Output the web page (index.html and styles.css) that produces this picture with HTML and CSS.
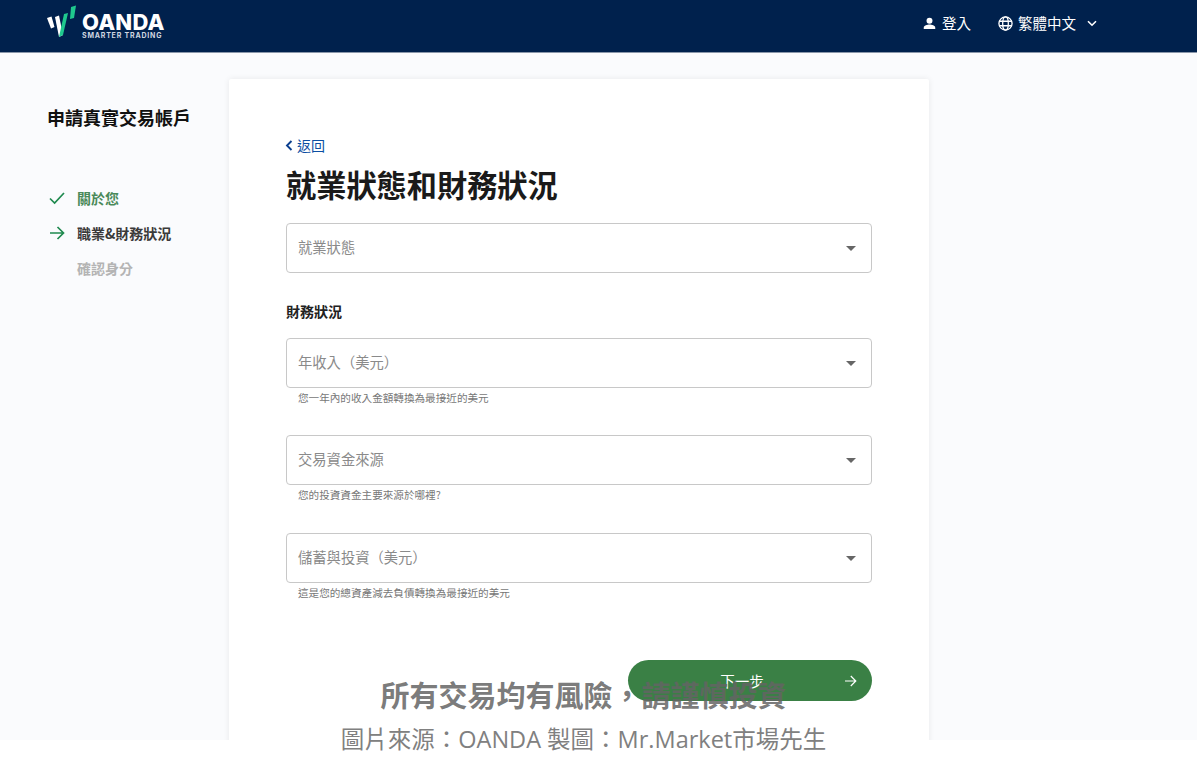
FILE: index.html
```html
<!DOCTYPE html>
<html lang="zh-Hant">
<head>
<meta charset="utf-8">
<title>OANDA</title>
<link rel="stylesheet" href="styles.css">
</head>
<body>
<div class="app">
  <header class="topbar">
    <div class="logo">
      <svg class="logo-mark" width="30" height="32" viewBox="0 0 30 32">
        <polygon points="0,13 4.5,11.5 7.5,22 4,23.5" fill="#fff"/>
        <polygon points="8,12 12,10.5 16,30 12,32" fill="#fff"/>
        <polygon points="16,30 12,32 17,9 21,8" fill="#1fc98e"/>
        <polygon points="24,2 29,0.5 27,13 23,14" fill="#1fc98e"/>
      </svg>
      <div class="logo-text">
        <span class="logo-name">OANDA</span>
        <span class="logo-tag">SMARTER TRADING</span>
      </div>
    </div>
    <nav class="topnav">
      <a class="nav-item login">
        <svg width="13" height="13" viewBox="0 0 14 14"><circle cx="7" cy="4" r="3.2" fill="#fff"/><path d="M0.8 13v-1.5C0.8 9.4 4.6 8.2 7 8.2s6.2 1.2 6.2 3.3V13z" fill="#fff"/></svg>
        <span>登入</span>
      </a>
      <a class="nav-item lang">
        <svg width="15" height="15" viewBox="0 0 16 16" fill="none" stroke="#fff" stroke-width="1.4"><circle cx="8" cy="8" r="7"/><ellipse cx="8" cy="8" rx="3" ry="7"/><path d="M1.3 5.6h13.4M1.3 10.4h13.4"/></svg>
        <span>繁體中文</span>
        <svg class="chev" width="10" height="7" viewBox="0 0 10 7" fill="none" stroke="#fff" stroke-width="1.6"><path d="M1 1.2l4 4 4-4"/></svg>
      </a>
    </nav>
  </header>
  <div class="main">
    <aside class="sidebar">
      <h2 class="side-title">申請真實交易帳戶</h2>
      <ul class="steps">
        <li class="step done">
          <svg width="18" height="14" viewBox="0 0 18 14" fill="none" stroke="#1f8a4f" stroke-width="1.7"><path d="M2 7.5l4.6 4.6L16 2"/></svg>
          <span>關於您</span>
        </li>
        <li class="step current">
          <svg width="18" height="14" viewBox="0 0 18 14" fill="none" stroke="#1f8a4f" stroke-width="1.7"><path d="M2 7h13.5M9.5 1l6 6-6 6"/></svg>
          <span>職業&amp;財務狀況</span>
        </li>
        <li class="step todo">
          <span class="step-spacer"></span>
          <span>確認身分</span>
        </li>
      </ul>
    </aside>
    <section class="card">
      <a class="back">
        <svg width="8" height="11" viewBox="0 0 8 11" fill="none" stroke="#0b3f8f" stroke-width="1.9"><path d="M6.5 1L2 5.5 6.5 10"/></svg>
        <span>返回</span>
      </a>
      <h1 class="title">就業狀態和財務狀況</h1>
      <div class="select first"><span>就業狀態</span><i class="caret"></i></div>
      <h3 class="section">財務狀況</h3>
      <div class="field">
        <div class="select"><span>年收入（美元）</span><i class="caret"></i></div>
        <p class="hint">您一年內的收入金額轉換為最接近的美元</p>
      </div>
      <div class="field wide-gap">
        <div class="select"><span>交易資金來源</span><i class="caret"></i></div>
        <p class="hint">您的投資資金主要來源於哪裡?</p>
      </div>
      <div class="field">
        <div class="select"><span>儲蓄與投資（美元）</span><i class="caret"></i></div>
        <p class="hint">這是您的總資產減去負債轉換為最接近的美元</p>
      </div>
      <div class="actions">
        <button class="next" type="button">
          <span>下一步</span>
          <svg width="13" height="12" viewBox="0 0 13 12" fill="none" stroke="#fff" stroke-width="1.2"><path d="M1 6h10.5M6.8 1l5 5-5 5"/></svg>
        </button>
      </div>
    </section>
  </div>
</div>
<div class="credit">
  <p class="credit-main">所有交易均有風險，請謹慎投資</p>
  <p class="credit-sub">圖片來源：OANDA 製圖：Mr.Market市場先生</p>
</div>
</body>
</html>
```

FILE: styles.css
```css
* { box-sizing: border-box; }
html, body { margin: 0; padding: 0; background: #fff; }
body {
  position: relative;
  width: 1197px;
  height: 768px;
  overflow: hidden;
  font-family: "Noto Sans CJK TC", "Noto Sans", sans-serif;
  color: #1c1c1c;
}
.app { height: 740px; overflow: hidden; background: #fafbfd; }

.topbar {
  height: 53px;
  background: #00214d;
  border-bottom: 1px solid #8a97aa;
  display: flex;
  align-items: center;
  justify-content: space-between;
  padding: 0 100px 0 47px;
}
.logo { display: flex; align-items: flex-start; height: 52px; }
.logo-mark { margin-top: 5px; margin-right: 5px; }
.logo-text { display: flex; flex-direction: column; margin-top: 12px; }
.logo-name {
  font-family: "Inter", "Liberation Sans", sans-serif;
  font-weight: 800;
  font-size: 22px;
  line-height: 20px;
  color: #fff;
  letter-spacing: 0.2px;
}
.logo-tag {
  font-family: "Inter", "Liberation Sans", sans-serif;
  font-weight: 700;
  font-size: 7px;
  line-height: 8px;
  letter-spacing: 0.8px;
  color: #cfd6e0;
}
.topnav { display: flex; align-items: center; gap: 27px; margin-top: -6px; }
.nav-item { display: flex; align-items: center; color: #fff; font-size: 14.5px; line-height: 20px; }
.login { gap: 6px; }
.lang { gap: 5px; }
.chev { margin-left: 6px; }

.main { display: flex; align-items: flex-start; padding-top: 26px; }
.sidebar { width: 229px; flex: none; padding: 26px 0 0 47px; }
.side-title { margin: 0; font-size: 18px; line-height: 25px; font-weight: 700; color: #111; }
.steps { list-style: none; margin: 58px 0 0; padding: 0; display: flex; flex-direction: column; gap: 15px; }
.step { display: flex; align-items: center; gap: 11px; height: 20px; font-size: 14px; font-weight: 700; }
.step svg { margin-left: 1px; flex: none; }
.step-spacer { width: 19px; }
.done { color: #4a8a5a; }
.current { color: #3a3a3a; }
.todo { color: #b4b4b4; }

.card {
  width: 700px;
  height: 700px;
  flex: none;
  background: #fff;
  box-shadow: 0 0 6px rgba(0, 0, 0, 0.08);
  border-radius: 2px;
  padding: 56px 57px 0;
}
.back { display: flex; align-items: center; gap: 4px; height: 20px; margin-left: -1px; color: #0b4ea2; font-size: 14px; line-height: 20px; }
.title { margin: 8px 0 0; font-size: 30.2px; line-height: 42px; font-weight: 700; color: #1a1a1a; }
.select {
  height: 50px;
  border: 1px solid #c8c8c8;
  border-radius: 4px;
  background: #fff;
  display: flex;
  align-items: center;
  justify-content: space-between;
  padding: 0 15px 0 11px;
  font-size: 14.3px;
  color: #8a8a8a;
}
.select span { margin-top: -3px; }
.select.first { margin-top: 18px; }
.caret {
  width: 0;
  height: 0;
  border-left: 5px solid transparent;
  border-right: 5px solid transparent;
  border-top: 5px solid #666;
}
.section { margin: 28px 0 0; font-size: 14px; line-height: 20px; font-weight: 700; color: #222; }
.section + .field { margin-top: 17px; }
.field { margin-bottom: 29px; }
.field.wide-gap { margin-bottom: 30px; }
.hint { margin: 2px 0 0; padding-left: 12px; height: 16px; font-size: 10.6px; line-height: 16px; color: #777; }
.actions { display: flex; justify-content: flex-end; margin-top: 59px; }
.next {
  position: relative;
  width: 244px;
  height: 41px;
  border: 0;
  border-radius: 21px;
  background: #3a8045;
  color: #fff;
  font: inherit;
  font-size: 14.5px;
  display: flex;
  align-items: center;
  justify-content: center;
  padding-right: 22px;
}
.next svg { position: absolute; right: 15px; top: 15px; }

.credit {
  position: absolute;
  left: 0;
  width: 1167px;
  top: 671px;
  text-align: center;
  font-family: "Open Sans", "Noto Sans CJK SC", sans-serif;
}
.credit p { margin: 0; }
.credit-main { font-size: 29px; line-height: 49px; font-weight: 700; color: rgba(100, 100, 100, 0.85); }
.credit-sub { font-size: 23.5px; line-height: 38px; color: #808080; margin-top: 0; }
```
